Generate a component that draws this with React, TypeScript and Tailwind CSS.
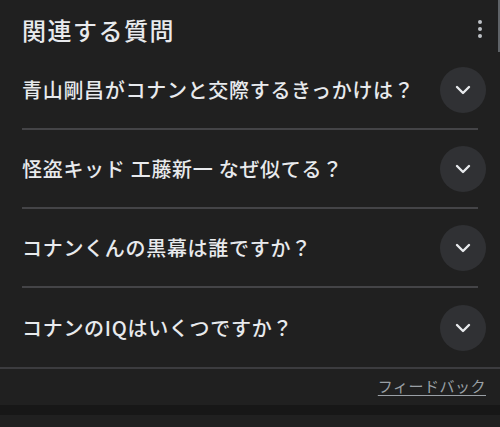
import React from 'react';

const questions = [
  '青山剛昌がコナンと交際するきっかけは？',
  '怪盗キッド 工藤新一 なぜ似てる？',
  'コナンくんの黒幕は誰ですか？',
  'コナンのIQはいくつですか？',
];

function Chevron() {
  return (
    <svg width="16" height="10" viewBox="0 0 16 10" fill="none">
      <path d="M2 2l6 6 6-6" stroke="#e8eaed" strokeWidth="2.4" strokeLinecap="round" strokeLinejoin="round" />
    </svg>
  );
}

export default function App() {
  return (
    <div
      className="relative w-[500px] h-[427px] bg-[#202020] text-[#e8eaed] overflow-hidden"
      style={{ fontFamily: '"Noto Sans CJK JP", "Noto Sans", sans-serif' }}
    >
      {/* scrollbar hint */}
      <div className="absolute right-0 top-0 w-[2px] h-[52px] bg-[#5f6368]" />

      {/* Header */}
      <div className="h-[51px] pl-[22px] pr-[16px] flex items-center justify-between">
        <h2 className="text-[24px] font-medium leading-none tracking-[1.5px] pt-[8px]">関連する質問</h2>
        <div className="flex flex-col gap-[3px] mr-[2px] mt-[6px]">
          <span className="w-[4px] h-[4px] rounded-full bg-[#bdc1c6]" />
          <span className="w-[4px] h-[4px] rounded-full bg-[#bdc1c6]" />
          <span className="w-[4px] h-[4px] rounded-full bg-[#bdc1c6]" />
        </div>
      </div>

      {/* Questions */}
      <div className="px-[22px]">
        {questions.map((q, i) => (
          <div
            key={q}
            className={`h-[79px] flex items-center justify-between ${
              i < questions.length - 1 ? 'border-b-2 border-[#444447]' : ''
            }`}
          >
            <span className="text-[20px] font-medium leading-none tracking-[0.7px]">{q}</span>
            <div className="w-[46px] h-[46px] -mr-[8px] rounded-full bg-[#303134] flex items-center justify-center">
              <Chevron />
            </div>
          </div>
        ))}
      </div>

      {/* Footer */}
      <div className="border-t-2 border-[#3c3c3f] h-[38px] flex items-center justify-end pr-[14px]">
        <span className="text-[15px] leading-none text-[#9aa0a6] underline underline-offset-[3px] tracking-[0.5px] pb-[4px]">
          フィードバック
        </span>
      </div>
      <div className="h-[10px] bg-[#171717]" />
    </div>
  );
}
